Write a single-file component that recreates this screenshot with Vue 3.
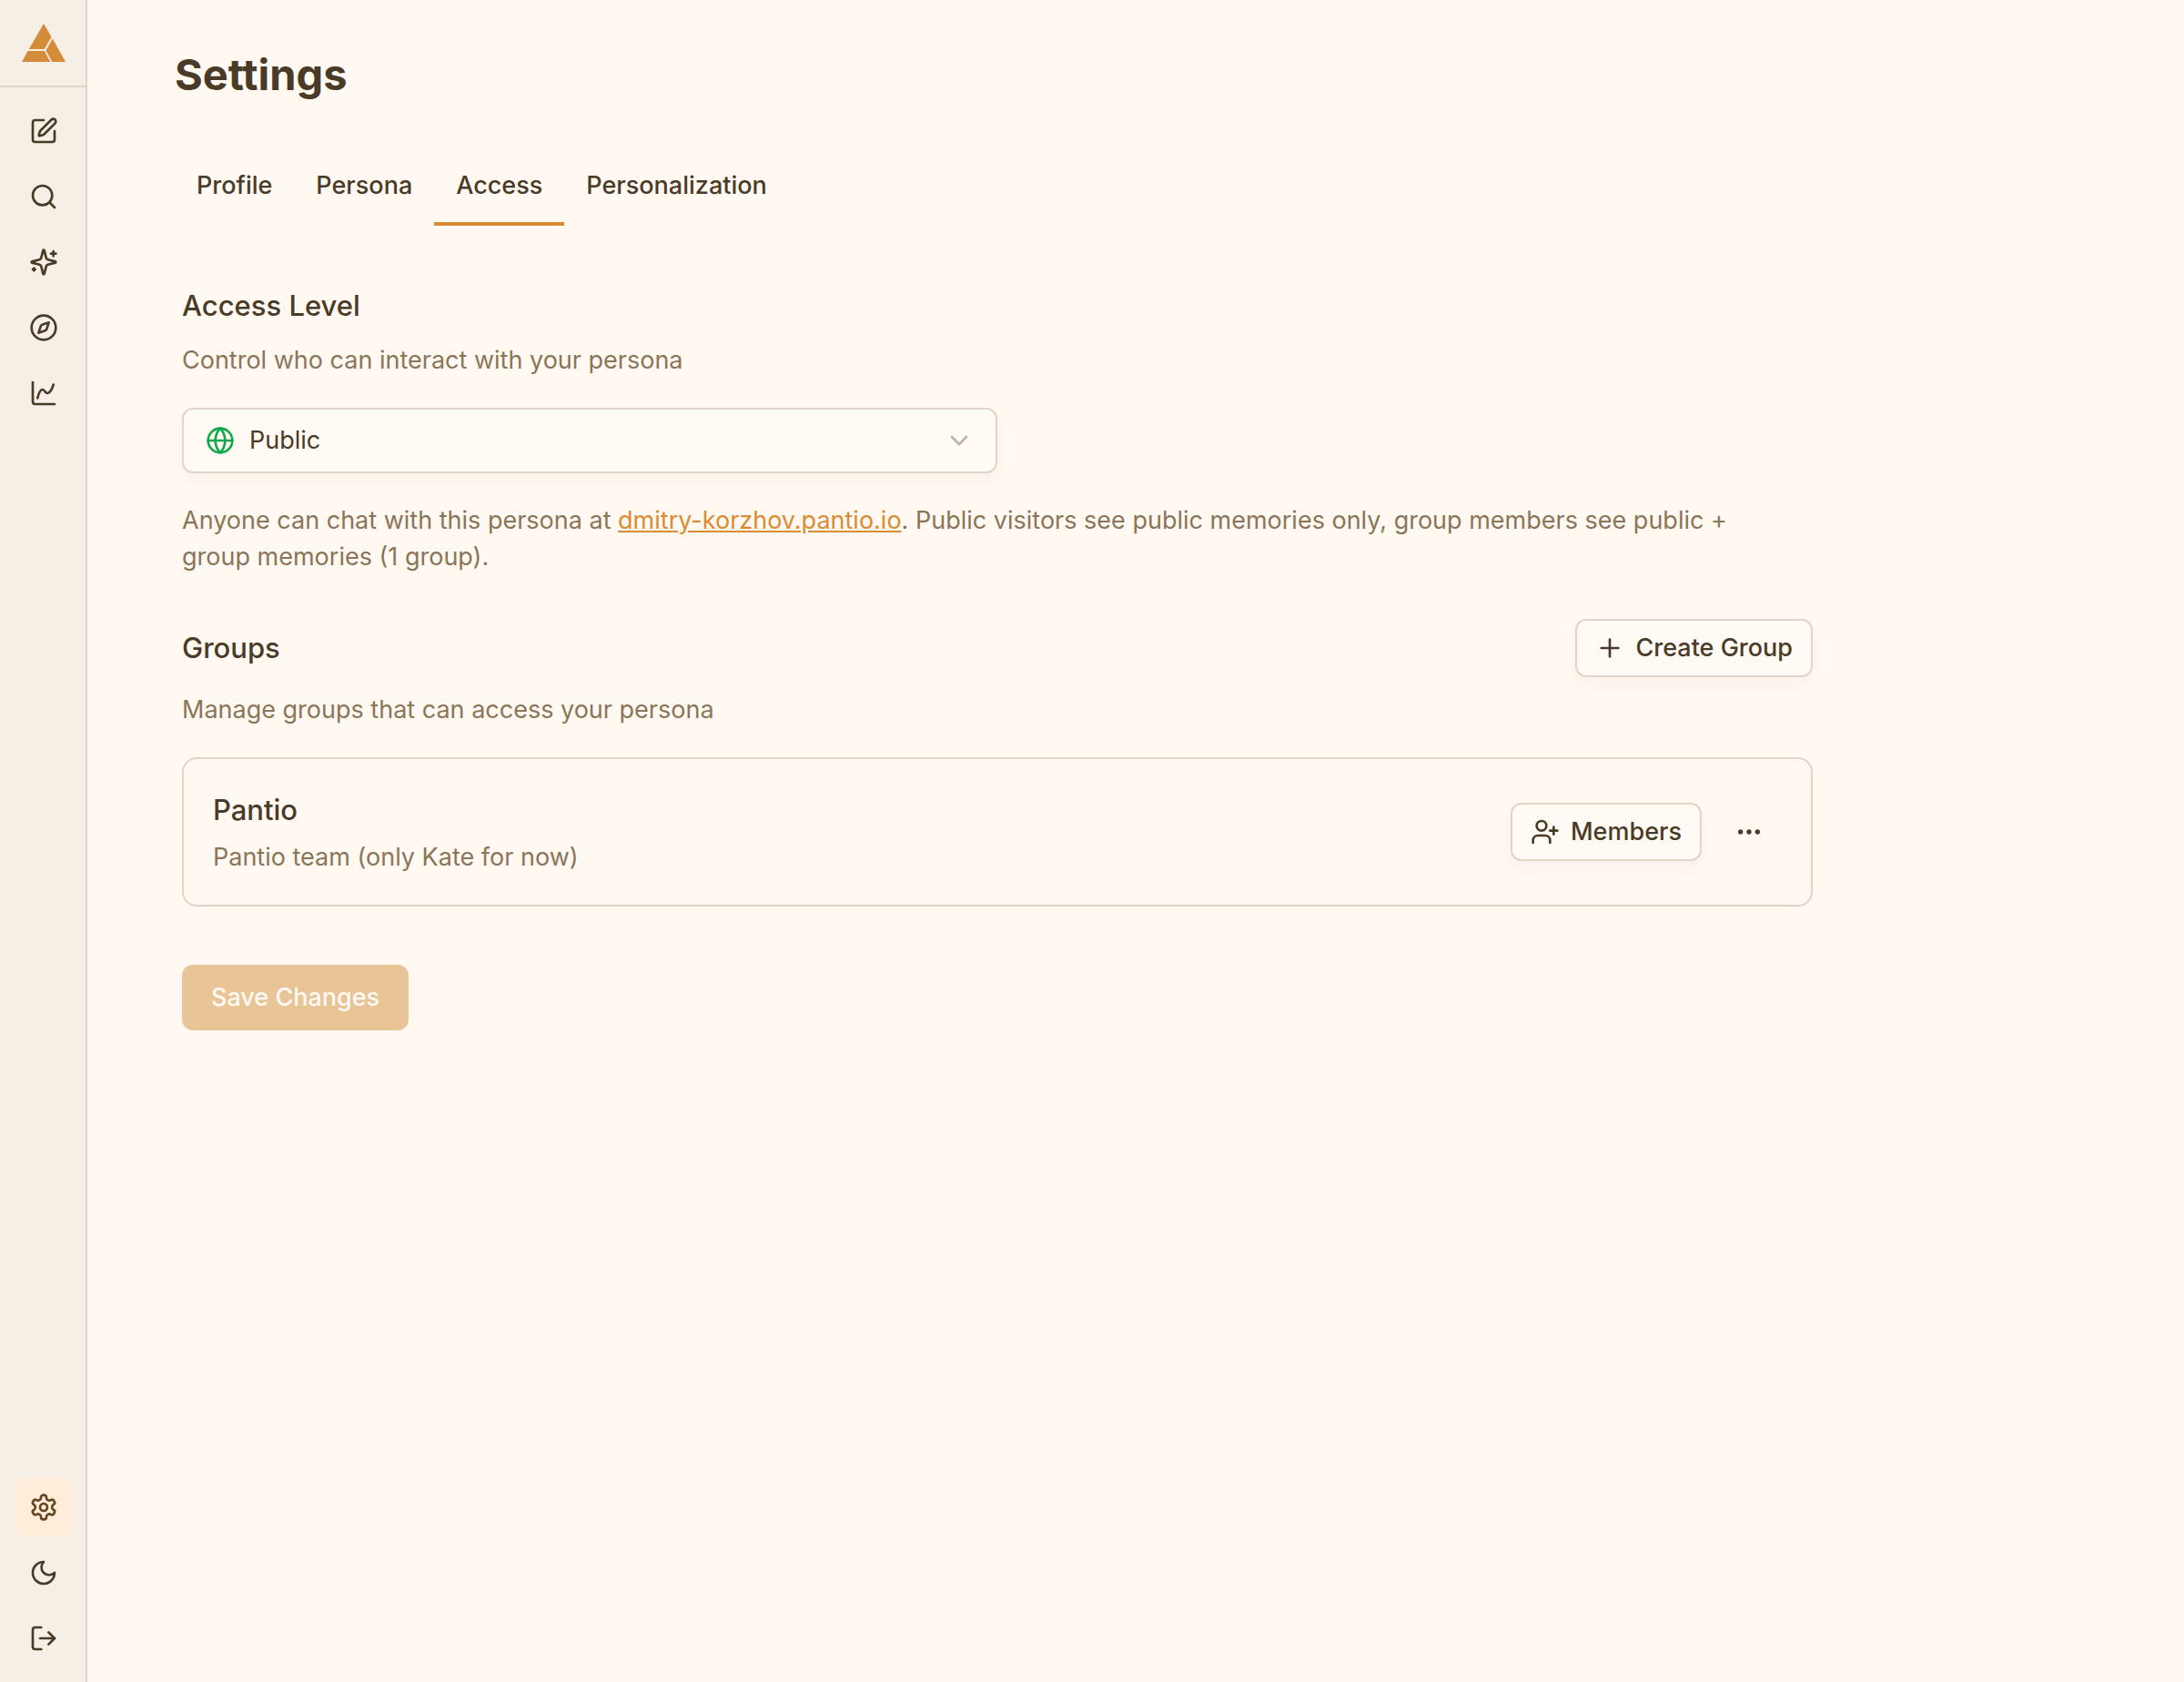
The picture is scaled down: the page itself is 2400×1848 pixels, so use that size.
<template>
  <div class="app">
    <aside class="sidebar">
      <a href="#" class="logo" aria-label="Home">
        <svg viewBox="0 0 48 42" class="logo-mark">
          <path d="M24 0 L32.6 14.5 L24.8 28 L7.8 28 Z" />
          <path d="M6.6 30 L25 30 L31.2 42 L0 42 Z" />
          <path d="M33.8 16.5 L48 42 L33.4 42 L26.4 29.4 Z" />
        </svg>
      </a>
      <nav class="nav">
        <button
          v-for="item in topItems"
          :key="item.label"
          class="nav-button"
          :aria-label="item.label"
        >
          <svg viewBox="0 0 24 24" class="icon">
            <path v-for="d in item.paths" :key="d" :d="d" />
          </svg>
        </button>
      </nav>
      <nav class="nav nav-bottom">
        <button
          v-for="item in bottomItems"
          :key="item.label"
          class="nav-button"
          :class="{ active: item.active }"
          :aria-label="item.label"
        >
          <svg viewBox="0 0 24 24" class="icon">
            <path v-for="d in item.paths" :key="d" :d="d" />
          </svg>
        </button>
      </nav>
    </aside>

    <main class="main">
      <h1 class="title">Settings</h1>

      <div class="tabs" role="tablist">
        <button
          v-for="tab in tabs"
          :key="tab"
          class="tab"
          :class="{ selected: tab === activeTab }"
          role="tab"
          :aria-selected="tab === activeTab"
          @click="activeTab = tab"
        >
          {{ tab }}
        </button>
      </div>

      <div class="content">
        <section>
          <label for="access-level" class="heading access-label">Access Level</label>
          <p class="muted">Control who can interact with your persona</p>
          <div class="select-wrap">
            <svg viewBox="0 0 24 24" class="icon globe">
              <circle cx="12" cy="12" r="10" />
              <path d="M12 2a14.5 14.5 0 0 0 0 20 14.5 14.5 0 0 0 0-20" />
              <path d="M2 12h20" />
            </svg>
            <select id="access-level" v-model="accessLevel" class="select">
              <option v-for="level in levels" :key="level">{{ level }}</option>
            </select>
            <svg viewBox="0 0 24 24" class="icon chevron">
              <path d="m6 9 6 6 6-6" />
            </svg>
          </div>
          <p class="muted hint">
            Anyone can chat with this persona at
            <a href="#" class="link">dmitry-korzhov.pantio.io</a>. Public visitors see public
            memories only, group members see public + group memories (1 group).
          </p>
        </section>

        <section class="groups">
          <div class="groups-head">
            <h2 class="heading">Groups</h2>
            <button class="outline-button">
              <svg viewBox="0 0 24 24" class="icon">
                <path d="M5 12h14" />
                <path d="M12 5v14" />
              </svg>
              Create Group
            </button>
          </div>
          <p class="muted">Manage groups that can access your persona</p>

          <div v-for="group in groups" :key="group.name" class="card">
            <div class="card-text">
              <h3 class="heading">{{ group.name }}</h3>
              <p class="muted">{{ group.description }}</p>
            </div>
            <div class="card-actions">
              <button class="outline-button">
                <svg viewBox="0 0 24 24" class="icon">
                  <path d="M16 21v-2a4 4 0 0 0-4-4H6a4 4 0 0 0-4 4v2" />
                  <circle cx="9" cy="7" r="4" />
                  <path d="M19 8v6" />
                  <path d="M22 11h-6" />
                </svg>
                Members
              </button>
              <button class="more-button" aria-label="More options">
                <svg viewBox="0 0 24 24" class="icon">
                  <circle cx="5" cy="12" r="1" />
                  <circle cx="12" cy="12" r="1" />
                  <circle cx="19" cy="12" r="1" />
                </svg>
              </button>
            </div>
          </div>
        </section>

        <button class="save-button" disabled>Save Changes</button>
      </div>
    </main>
  </div>
</template>

<script setup>
import { ref } from 'vue'

const tabs = ['Profile', 'Persona', 'Access', 'Personalization']
const activeTab = ref('Access')

const levels = ['Public', 'Private']
const accessLevel = ref('Public')

const groups = ref([
  { name: 'Pantio', description: 'Pantio team (only Kate for now)' }
])

const topItems = [
  {
    label: 'New chat',
    paths: [
      'M12 3H5a2 2 0 0 0-2 2v14a2 2 0 0 0 2 2h14a2 2 0 0 0 2-2v-7',
      'M18.375 2.625a1 1 0 0 1 3 3l-9.013 9.014a2 2 0 0 1-.853.505l-2.873.84a.5.5 0 0 1-.62-.62l.84-2.873a2 2 0 0 1 .506-.852z'
    ]
  },
  {
    label: 'Search',
    paths: ['M19 11a8 8 0 1 1-16 0 8 8 0 0 1 16 0z', 'm21 21-4.3-4.3']
  },
  {
    label: 'Create',
    paths: [
      'M9.937 15.5A2 2 0 0 0 8.5 14.063l-6.135-1.582a.5.5 0 0 1 0-.962L8.5 9.936A2 2 0 0 0 9.937 8.5l1.582-6.135a.5.5 0 0 1 .963 0L14.063 8.5A2 2 0 0 0 15.5 9.937l6.135 1.581a.5.5 0 0 1 0 .964L15.5 14.063a2 2 0 0 0-1.437 1.437l-1.582 6.135a.5.5 0 0 1-.963 0z',
      'M20 3v4',
      'M22 5h-4',
      'M4 17v2',
      'M5 18H3'
    ]
  },
  {
    label: 'Explore',
    paths: [
      'M22 12a10 10 0 1 1-20 0 10 10 0 0 1 20 0z',
      'm16.24 7.76-1.804 5.411a2 2 0 0 1-1.265 1.265L7.76 16.24l1.804-5.411a2 2 0 0 1 1.265-1.265z'
    ]
  },
  {
    label: 'Analytics',
    paths: ['M3 3v16a2 2 0 0 0 2 2h16', 'M7 16c.5-2 1.5-7 4-7 2 0 2 3 4 3 2.5 0 4.5-5 5-7']
  }
]

const bottomItems = [
  {
    label: 'Settings',
    active: true,
    paths: [
      'M12.22 2h-.44a2 2 0 0 0-2 2v.18a2 2 0 0 1-1 1.73l-.43.25a2 2 0 0 1-2 0l-.15-.08a2 2 0 0 0-2.73.73l-.22.38a2 2 0 0 0 .73 2.73l.15.1a2 2 0 0 1 1 1.72v.51a2 2 0 0 1-1 1.74l-.15.09a2 2 0 0 0-.73 2.73l.22.38a2 2 0 0 0 2.73.73l.15-.08a2 2 0 0 1 2 0l.43.25a2 2 0 0 1 1 1.73V20a2 2 0 0 0 2 2h.44a2 2 0 0 0 2-2v-.18a2 2 0 0 1 1-1.73l.43-.25a2 2 0 0 1 2 0l.15.08a2 2 0 0 0 2.73-.73l.22-.39a2 2 0 0 0-.73-2.73l-.15-.08a2 2 0 0 1-1-1.74v-.5a2 2 0 0 1 1-1.74l.15-.09a2 2 0 0 0 .73-2.73l-.22-.38a2 2 0 0 0-2.73-.73l-.15.08a2 2 0 0 1-2 0l-.43-.25a2 2 0 0 1-1-1.73V4a2 2 0 0 0-2-2z',
      'M15 12a3 3 0 1 1-6 0 3 3 0 0 1 6 0z'
    ]
  },
  {
    label: 'Dark mode',
    paths: ['M12 3a6 6 0 0 0 9 9 9 9 0 1 1-9-9z']
  },
  {
    label: 'Log out',
    paths: ['M10 3H5a2 2 0 0 0-2 2v14a2 2 0 0 0 2 2h5', 'm16 17 5-5-5-5', 'M21 12H9']
  }
]
</script>

<style>
body {
  margin: 0;
  background: #fff9f2;
}
</style>

<style scoped>
.app {
  display: flex;
  min-height: 100vh;
  background: #fff9f2;
  color: #4a3a28;
  font-family: Inter, "Liberation Sans", sans-serif;
  font-size: 27px;
  line-height: 40px;
}

button,
select {
  font: inherit;
  color: inherit;
  margin: 0;
  cursor: pointer;
}

h1,
h2,
h3,
p {
  margin: 0;
}

.icon {
  width: 32px;
  height: 32px;
  flex-shrink: 0;
  fill: none;
  stroke: currentColor;
  stroke-width: 2;
  stroke-linecap: round;
  stroke-linejoin: round;
}

/* Sidebar */
.sidebar {
  display: flex;
  flex-direction: column;
  flex-shrink: 0;
  width: 94px;
  background: #f5efe6;
  border-right: 2px solid #e0d5c7;
}

.logo {
  display: flex;
  align-items: center;
  height: 94px;
  padding-left: 24px;
  border-bottom: 2px solid #e0d5c7;
}

.logo-mark {
  flex-shrink: 0;
  width: 48px;
  height: 42px;
  fill: #d48c3a;
}

.nav {
  display: flex;
  flex-direction: column;
  align-items: flex-start;
  gap: 8px;
  padding: 16px;
}

.nav-bottom {
  margin-top: auto;
}

.nav-button {
  display: flex;
  align-items: center;
  justify-content: center;
  flex-shrink: 0;
  width: 64px;
  height: 64px;
  padding: 0;
  border: none;
  border-radius: 12px;
  background: none;
}

.nav-button.active {
  background: #ffecd9;
  color: #634522;
}

/* Page */
.main {
  flex: 1;
  min-width: 0;
  padding: 50px 96px;
}

.title {
  font-size: 47px;
  line-height: 64px;
  font-weight: 700;
}

.tabs {
  display: flex;
  margin-top: 46px;
}

.tab {
  padding: 24px 24px 20px;
  border: none;
  border-bottom: 4px solid transparent;
  background: none;
  font-weight: 500;
}

.tab.selected {
  border-bottom-color: #d98c33;
}

.content {
  max-width: 1792px;
  margin-top: 64px;
  padding: 0 8px;
}

.heading {
  font-size: 31px;
  line-height: 48px;
  font-weight: 500;
}

.access-label {
  display: block;
  margin-bottom: 16px;
}

.muted {
  color: #8b7559;
}

.select-wrap {
  position: relative;
  width: 50%;
  margin-top: 32px;
}

.select {
  display: block;
  width: 100%;
  height: 72px;
  padding: 0 72px;
  border: 2px solid #e0d5c7;
  border-radius: 12px;
  background: #fffaf3;
  box-shadow: 0 8px 16px rgba(74, 58, 40, 0.04);
  appearance: none;
}

.globe,
.chevron {
  position: absolute;
  top: 20px;
  pointer-events: none;
}

.globe {
  left: 26px;
  color: #12a84b;
}

.chevron {
  right: 26px;
  color: #c0b3a3;
}

.hint {
  max-width: 1760px;
  margin-top: 32px;
}

.link {
  color: #d98c33;
  text-decoration: underline;
}

/* Groups */
.groups {
  margin-top: 48px;
}

.groups-head {
  display: flex;
  align-items: center;
  justify-content: space-between;
  margin-bottom: 16px;
}

.outline-button {
  display: flex;
  align-items: center;
  gap: 12px;
  height: 64px;
  padding: 0 20px;
  border: 2px solid #e0d5c7;
  border-radius: 12px;
  background: #fffaf3;
  box-shadow: 0 8px 16px rgba(74, 58, 40, 0.04);
  font-weight: 500;
}

.card {
  display: flex;
  align-items: center;
  justify-content: space-between;
  margin-top: 32px;
  padding: 32px;
  border: 2px solid #e0d5c7;
  border-radius: 16px;
}

.card-text .muted {
  margin-top: 8px;
}

.card-actions {
  display: flex;
  align-items: center;
  gap: 16px;
}

.more-button {
  display: flex;
  align-items: center;
  justify-content: center;
  width: 72px;
  height: 64px;
  padding: 0;
  border: none;
  background: none;
}

.save-button {
  height: 72px;
  margin-top: 64px;
  padding: 0 32px;
  border: none;
  border-radius: 12px;
  background: #e8c497;
  color: #fffaf3;
  font-weight: 500;
  cursor: default;
}
</style>
